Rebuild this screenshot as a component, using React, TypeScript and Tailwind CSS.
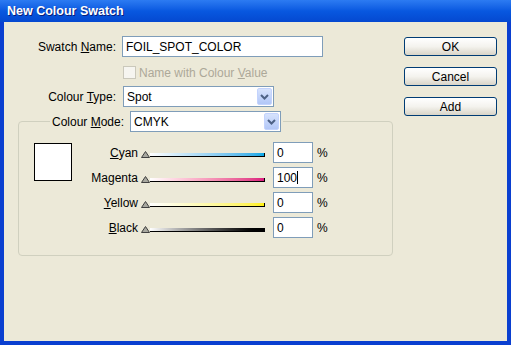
import React from 'react'

const font = { fontFamily: '"Liberation Sans", Arial, sans-serif' }

function Chevron() {
  return (
    <svg width="9" height="6" viewBox="0 0 9 6">
      <path d="M1 1 L4.5 4.5 L8 1" fill="none" stroke="#4D6185" strokeWidth="2" />
    </svg>
  )
}

function Select({ value, width }: { value: string; width: string }) {
  return (
    <div className={`${width} h-[21px] border border-[#7F9DB9] bg-white flex items-center justify-between pl-[3px] pr-[1px]`}>
      <span className="text-[12px] text-black leading-none">{value}</span>
      <div className="w-[15px] h-[17px] rounded-[2px] bg-gradient-to-b from-[#D7E3FD] to-[#B2C7F7] border border-[#C3D3FD] flex items-center justify-center">
        <Chevron />
      </div>
    </div>
  )
}

function Button({ label }: { label: string }) {
  return (
    <button className="w-[93px] h-[19px] rounded-[3px] border border-[#003C74] bg-gradient-to-b from-white via-[#F4F3EE] to-[#D9D5C8] text-[12px] text-black leading-none">
      {label}
    </button>
  )
}

const inks = [
  { pre: '', u: 'C', post: 'yan', grad: 'bg-gradient-to-r from-white to-[#00A8E6]', value: '0' },
  { pre: 'Ma', u: 'g', post: 'enta', grad: 'bg-gradient-to-r from-white to-[#DB1B7E]', value: '100', caret: true },
  { pre: '', u: 'Y', post: 'ellow', grad: 'bg-gradient-to-r from-white to-[#FFF000]', value: '0' },
  { pre: '', u: 'B', post: 'lack', grad: 'bg-gradient-to-r from-white to-black', value: '0' },
]

function Slider({ grad }: { grad: string }) {
  return (
    <div className="w-[124px] flex items-end h-[10px]">
      <svg width="9" height="7" viewBox="0 0 9 7" className="shrink-0">
        <polygon points="4.5,0.5 8.5,6.5 0.5,6.5" fill="#A8A8A0" stroke="#404040" strokeWidth="1" />
      </svg>
      <div className={`flex-1 h-[4px] mb-[1px] ${grad} border-b border-r border-black`} />
    </div>
  )
}

export default function App() {
  return (
    <div style={font} className="w-[511px] h-[345px] flex flex-col bg-[#0A3FD0]">
      <div className="h-[22px] shrink-0 bg-gradient-to-b from-[#2C7BF2] via-[#0858E0] to-[#0548D0] flex items-center pl-[7px]">
        <span className="text-white font-bold text-[12.5px] [text-shadow:1px_1px_0_#0A1E7A]">New Colour Swatch</span>
      </div>
      <div className="flex-1 mx-[4px] mb-[4px] bg-[#ECE9D8] flex text-[12px] text-black">
        <div className="w-[392px] pt-[14px] flex flex-col">
          <div className="flex items-center h-[21px]">
            <span className="w-[112px] text-right">
              Swatch <u>N</u>ame:
            </span>
            <div className="ml-[6px] w-[201px] h-[21px] border border-[#7F9DB9] bg-white flex items-center pl-[3px]">
              FOIL_SPOT_COLOR
            </div>
          </div>
          <div className="flex items-center mt-[9px] ml-[119px] h-[13px]">
            <div className="w-[13px] h-[13px] border border-[#CAC8BB] bg-[#F6F5F0]" />
            <span className="ml-[3px] text-[#ACA899]">
              Name with Colour <u>V</u>alue
            </span>
          </div>
          <div className="flex items-center mt-[7px]">
            <span className="w-[112px] text-right">
              Colour <u>T</u>ype:
            </span>
            <div className="ml-[7px]">
              <Select value="Spot" width="w-[151px]" />
            </div>
          </div>
          <fieldset className="ml-[14px] mt-[4px] w-[375px] border border-[#D0D0BF] rounded-[4px] p-0">
            <legend className="ml-[31px] px-[2px]">
              <div className="flex items-center">
                <span>
                  Colour <u>M</u>ode:
                </span>
                <div className="ml-[6px]">
                  <Select value="CMYK" width="w-[151px]" />
                </div>
              </div>
            </legend>
            <div className="flex pl-[15px] pt-[10px] pb-[17px]">
              <div className="w-[38px] h-[38px] mt-[1px] border border-black bg-white shrink-0" />
              <div className="flex flex-col gap-[4px]">
                {inks.map((ink) => (
                  <div key={ink.post} className="flex items-center h-[21px]">
                    <span className="w-[66px] text-right">
                      {ink.pre}
                      <u>{ink.u}</u>
                      {ink.post}
                    </span>
                    <div className="ml-[3px]">
                      <Slider grad={ink.grad} />
                    </div>
                    <div className="ml-[8px] w-[40px] h-[21px] border border-[#7F9DB9] bg-white flex items-center pl-[3px]">
                      {ink.value}
                      {ink.caret && <span className="w-px h-[13px] bg-black" />}
                    </div>
                    <span className="ml-[4px]">%</span>
                  </div>
                ))}
              </div>
            </div>
          </fieldset>
        </div>
        <div className="ml-[8px] pt-[15px] flex flex-col gap-[11px]">
          <Button label="OK" />
          <Button label="Cancel" />
          <Button label="Add" />
        </div>
      </div>
    </div>
  )
}
